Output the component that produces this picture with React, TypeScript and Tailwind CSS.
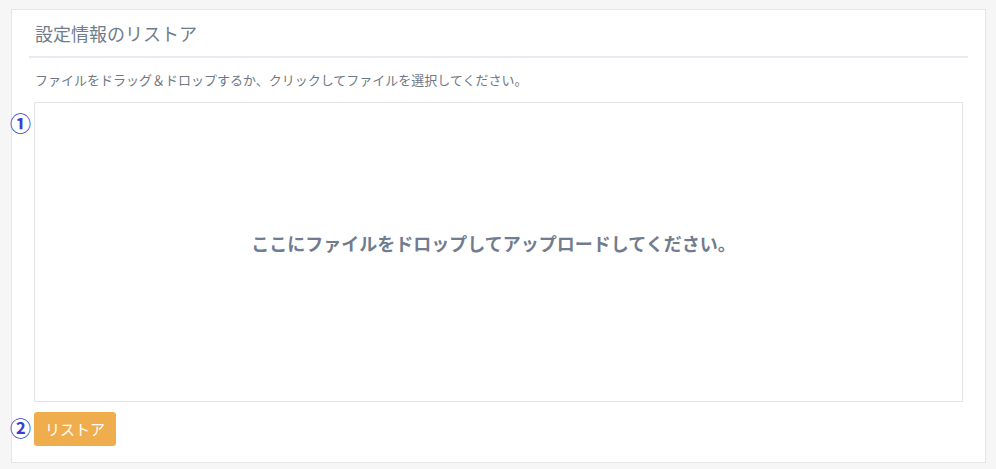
import React from 'react';

const font = { fontFamily: '"Noto Sans CJK JP", "Noto Sans", sans-serif' };

function Marker({ n, className }: { n: string; className: string }) {
  return (
    <span
      className={`absolute text-[21px] leading-none font-bold text-[#3a3fd4] ${className}`}
      style={font}
    >
      {n}
    </span>
  );
}

export default function App() {
  return (
    <div className="min-h-[469px] w-[996px] bg-[#f6f6f6] pt-[9px] pl-[11px]" style={font}>
      <div className="relative w-[975px] h-[454px] bg-white border border-[#e6e6e6]">
        <div className="mx-[17px] h-[48px] flex items-center border-b-2 border-[#e7e9ee] px-[6px]">
          <h2 className="text-[18px] text-[#6f7c8b] font-normal">設定情報のリストア</h2>
        </div>

        <div className="px-[22px]">
          <p className="mt-[12px] h-[20px] leading-[20px] text-[13px] text-[#6f7884] pl-px">
            ファイルをドラッグ＆ドロップするか、クリックしてファイルを選択してください。
          </p>

          <div className="mt-[12px] h-[300px] border border-[#e4e4e4] flex items-center justify-center pr-[10px]">
            <span className="text-[18px] font-bold text-[#717c8e] -mt-[18px]">
              ここにファイルをドロップしてアップロードしてください。
            </span>
          </div>

          <button className="mt-[10px] h-[34px] w-[82px] rounded-[3px] bg-[#f0ad4e] text-white text-[15px]">
            リストア
          </button>
        </div>

        <Marker n="①" className="left-[-2px] top-[102px]" />
        <Marker n="②" className="left-[-2px] top-[407px]" />
      </div>
    </div>
  );
}
